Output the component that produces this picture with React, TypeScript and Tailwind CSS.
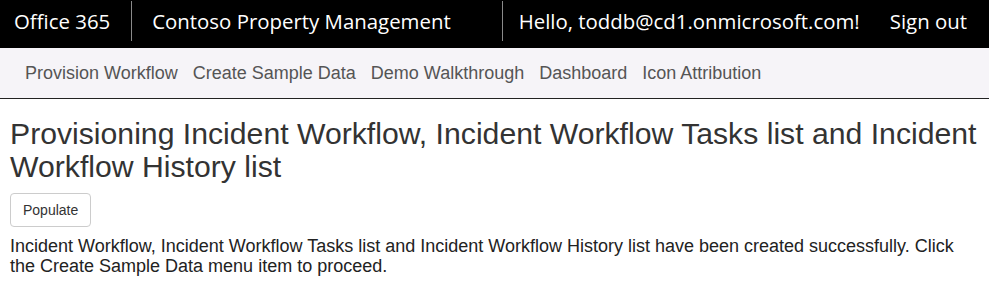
export default function App() {
  const nav = ['Provision Workflow', 'Create Sample Data', 'Demo Walkthrough', 'Dashboard', 'Icon Attribution'];
  return (
    <div className="min-h-screen bg-white font-['Liberation_Sans',Arial,sans-serif] text-[#333]">
      {/* Top bar */}
      <div className="flex h-[48px] items-center bg-black text-white font-['Open_Sans','Noto_Sans',sans-serif] text-[20.4px]">
        <div className="flex h-full items-center pl-[14px] pr-[21px] pb-[5px]">Office 365</div>
        <div className="mb-[6px] h-[40px] w-px bg-[#8a8a8a]" />
        <div className="flex h-full flex-1 items-center pl-[20px] pb-[5px]">Contoso Property Management</div>
        <div className="mb-[6px] h-[40px] w-px bg-[#8a8a8a]" />
        <div className="flex h-full items-center pl-[16px] pb-[5px]">
          <span>Hello, toddb@cd1.onmicrosoft.com!</span>
          <span className="ml-[30px] mr-[22px]">Sign out</span>
        </div>
      </div>

      {/* Nav */}
      <div className="flex h-[51px] items-center gap-[15px] border-b border-[#222] bg-[#f6f4f8] pl-[25px] text-[18px] text-[#555]">
        {nav.map((n) => (
          <span key={n}>{n}</span>
        ))}
      </div>

      {/* Content */}
      <div className="px-[10px] pt-[18px]">
        <h1 className="text-[30.2px] leading-[33px]">
          Provisioning Incident Workflow, Incident Workflow Tasks list and Incident Workflow History list
        </h1>
        <button className="mt-[10px] h-[34px] rounded-[4px] border border-[#ccc] bg-white px-[12px] text-[14px] leading-[20px] text-[#333]">
          Populate
        </button>
        <p className="mt-[9px] text-[18px] leading-[20px] text-[#222]">
          Incident Workflow, Incident Workflow Tasks list and Incident Workflow History list have been created successfully. Click the Create Sample Data menu item to proceed.
        </p>
      </div>
    </div>
  );
}
